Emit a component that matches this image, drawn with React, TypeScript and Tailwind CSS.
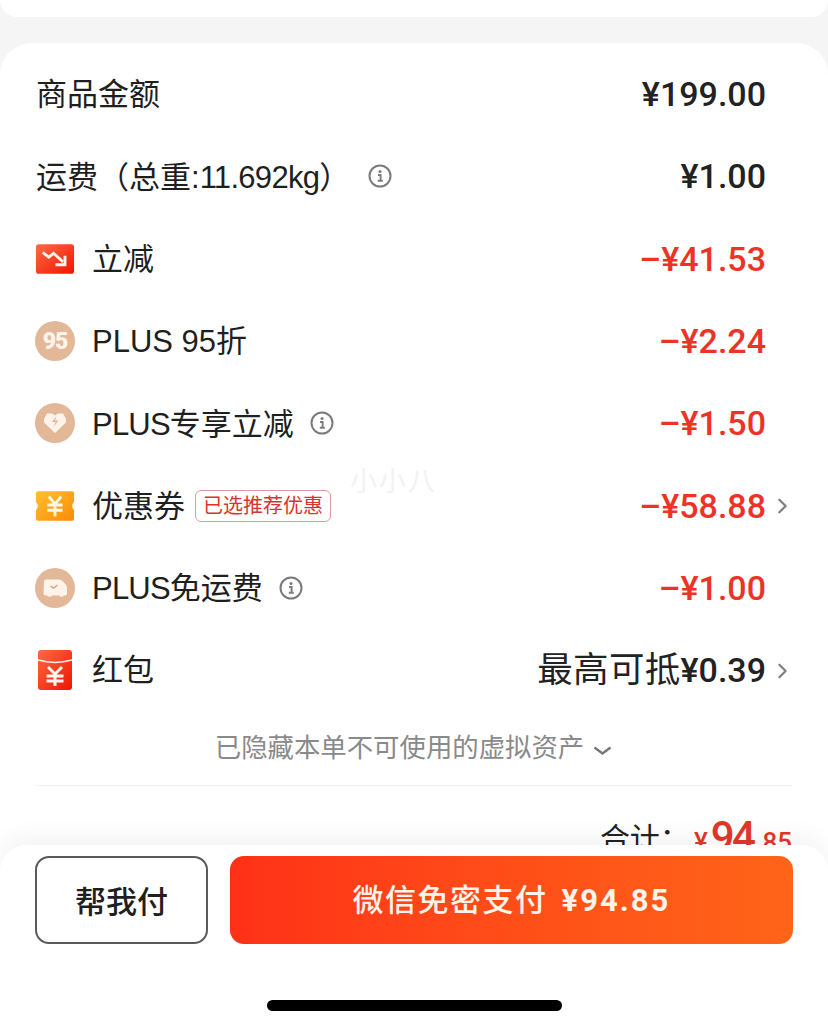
// Order price breakdown with the fixed pay bar at the bottom.
import { ChevronRight } from 'lucide-react';
import type { ReactNode } from 'react';

const BASE = "font-['Liberation_Sans','Noto_Sans_CJK_SC',sans-serif]";
const CJK = "font-['Noto_Sans_CJK_SC','Noto_Sans',sans-serif]";
const NUM = "font-['Roboto','Noto_Sans_CJK_SC',sans-serif]";

function InfoIcon() {
  return (
    <svg width="24" height="24" viewBox="0 0 24 24" fill="none" aria-hidden="true">
      <circle cx="12" cy="12" r="10.5" stroke="#7b7b7b" strokeWidth="2" />
      <circle cx="12" cy="7.6" r="1.5" fill="#7b7b7b" />
      <path d="M10 11h2.600v5.600M9.800 16.800h5" stroke="#7b7b7b" strokeWidth="1.900" />
    </svg>
  );
}

function DropIcon() {
  return (
    <svg width="42" height="32" viewBox="0 0 42 32" aria-hidden="true">
      <defs>
        <linearGradient id="drop" x1="0" y1="0" x2="1" y2="1">
          <stop offset="0" stopColor="#ff6a45" />
          <stop offset="1" stopColor="#f01400" />
        </linearGradient>
      </defs>
      <rect width="40" height="31" x="1" y="0.5" rx="3" fill="url(#drop)" />
      <path d="M8 9l6.500 5 5-4 10 9" fill="none" stroke="#fff3ea" strokeWidth="3" />
      <path d="M31.500 12.500v9.500h-10" fill="none" stroke="#fff3ea" strokeWidth="3" />
    </svg>
  );
}

function Badge95() {
  return (
    <svg width="40" height="40" viewBox="0 0 40 40" aria-hidden="true">
      <circle cx="20" cy="20" r="20" fill="#e3b899" />
      <text x="20" y="28" textAnchor="middle" fontFamily="Roboto" fontWeight="900" fontSize="23" letterSpacing="-1" fill="#fff3ea">
        95
      </text>
    </svg>
  );
}

function BadgeBolt() {
  return (
    <svg width="40" height="40" viewBox="0 0 40 40" aria-hidden="true">
      <circle cx="20" cy="20" r="20" fill="#e3b899" />
      <path d="M9 16l3-5.500h5l3 2 3-2h5l3 5.500v3.500l-11 10.500-11-10.500z" fill="#fff3ea" />
      <path d="M21.500 13l-4.500 6h3.500l-2 5 5-6.500h-3.500z" fill="#e3b899" />
    </svg>
  );
}

function BadgeTruck() {
  return (
    <svg width="40" height="40" viewBox="0 0 40 40" aria-hidden="true">
      <circle cx="20" cy="20" r="20" fill="#e3b899" />
      <path
        d="M9 13.500q0-2 2-2h13q2 0 3.500 1.500l3.500 4q1 1.200 1 2.500v6q0 2-2 2h-1a3 3 0 0 1-5 0h-7a3 3 0 0 1-5 0h-1q-2.500 0-2.500-2.500z"
        fill="#fff3ea"
      />
      <path d="M15.500 18l3 2 4-3" fill="none" stroke="#c9a68e" strokeWidth="1.500" />
    </svg>
  );
}

function CouponIcon() {
  return (
    <svg width="42" height="32" viewBox="0 0 42 32" aria-hidden="true">
      <defs>
        <linearGradient id="coupon" x1="0" y1="0" x2="1" y2="1">
          <stop offset="0" stopColor="#ffc02e" />
          <stop offset="1" stopColor="#fb8a08" />
        </linearGradient>
      </defs>
      <path
        d="M3 .5h36q2 0 2 2V12q-2 1-2 4t2 4v9.500q0 2-2 2H3q-2 0-2-2V20q2-1 2-4t-2-4V2.500q0-2 2-2z"
        fill="url(#coupon)"
      />
      <path d="M14.500 6l6.500 8 6.500-8M13 15h16M13 20.500h16M21 14v13" fill="none" stroke="#fff6e6" strokeWidth="3" />
    </svg>
  );
}

function RedPacketIcon() {
  return (
    <svg width="34" height="40" viewBox="0 0 34 40" aria-hidden="true">
      <defs>
        <linearGradient id="packet" x1="0" y1="0" x2="1" y2="1">
          <stop offset="0" stopColor="#ff6a45" />
          <stop offset="1" stopColor="#f01400" />
        </linearGradient>
      </defs>
      <rect width="34" height="40" rx="3" fill="url(#packet)" />
      <path d="M0 10q17 5 34 0" fill="none" stroke="#fff0e8" strokeWidth="1.500" />
      <path d="M10 17l7 7 7-7M8.500 26h17M8.500 31h17M17 24v12" fill="none" stroke="#fff6ef" strokeWidth="3" />
    </svg>
  );
}

function Row({ icon, children, right }: { icon?: ReactNode; children: ReactNode; right: ReactNode }) {
  return (
    <div className="flex h-[82.3px] items-center">
      {icon && <div className="mr-[17px] flex w-[40px] justify-center">{icon}</div>}
      <div className="flex min-w-0 flex-1 items-center pt-[3px] text-[31px] text-[#1f1f1f]">{children}</div>
      {right}
    </div>
  );
}

function Amount({ value, red, arrow }: { value: string; red?: boolean; arrow?: boolean }) {
  return (
    <div className="relative mr-[26px] mt-[1px] flex items-center">
      <span className={`${NUM} text-[34px] font-medium ${red ? 'text-[#ed3325]' : 'text-[#222222]'}`}>{value}</span>
      {arrow && (
        <ChevronRight className="absolute left-full top-1/2 ml-[4px] -translate-y-1/2 text-[#808080]" size={25} strokeWidth={2.2} aria-hidden="true" />
      )}
    </div>
  );
}

export default function App() {
  return (
    <div className={`relative h-[1027px] w-[828px] overflow-hidden bg-[#f5f5f5] ${BASE}`}>
      <div className="h-[17px] rounded-b-[26px] bg-white" />

      <div className="mt-[26px] h-[984px] rounded-t-[32px] bg-white pl-[35px] pr-[36px] pt-[10px]">
        <Row right={<Amount value="¥199.00" />}>
          <span className="ml-[1px]">商品金额</span>
        </Row>
        <Row right={<Amount value="¥1.00" />}>
          <span className="ml-[1px]">
            运费（总重:<span className="tracking-[-0.7px]">11.692kg</span>）
          </span>
          <span className="mb-[3px] ml-[18px]">
            <InfoIcon />
          </span>
        </Row>
        <Row icon={<DropIcon />} right={<Amount value="–¥41.53" red />}>立减</Row>
        <Row icon={<Badge95 />} right={<Amount value="–¥2.24" red />}>PLUS 95折</Row>
        <Row icon={<BadgeBolt />} right={<Amount value="–¥1.50" red />}>
          <span className="tracking-[-0.8px]">PLUS</span>专享立减
          <span className="mb-[3px] ml-[16px]">
            <InfoIcon />
          </span>
        </Row>
        <Row icon={<CouponIcon />} right={<Amount value="–¥58.88" red arrow />}>
          优惠券
          <span className="mb-[3px] ml-[10px] flex h-[32px] w-[136px] items-center justify-center rounded-[6px] border-[1.5px] border-[#e29a9a] text-[20px] text-[#d9342b]">
            已选推荐优惠
          </span>
        </Row>
        <Row icon={<BadgeTruck />} right={<Amount value="–¥1.00" red />}>
          <span className="tracking-[-0.8px]">PLUS</span>免运费
          <span className="mb-[3px] ml-[16px]">
            <InfoIcon />
          </span>
        </Row>
        <Row
          icon={<RedPacketIcon />}
          right={
            <div className="flex items-center text-[#222222]">
              <span className="text-[35.5px] tracking-[0.3px]">最高可抵</span>
              <Amount value="¥0.39" arrow />
            </div>
          }
        >
          红包
        </Row>

        <div className="flex h-[75px] items-center justify-center border-b border-[#f3f3f3] text-[26.4px] text-[#8a8a8a]">
          已隐藏本单不可使用的虚拟资产
          <svg className="ml-[9px] mt-[5px]" width="19" height="10" viewBox="0 0 19 10" fill="none" aria-hidden="true">
            <path d="M1.500 1.500l8 6 8-6" stroke="#777777" strokeWidth="2.500" />
          </svg>
        </div>

        <div className="mt-[19px] flex items-baseline justify-end text-[#222222]">
          <span className="mr-[4px] -translate-y-[2px] text-[30px]">合计：</span>
          <span className={`${NUM} text-[26px] font-medium text-[#e1372b]`}>¥</span>
          <span className={`${NUM} ml-[3px] text-[42px] font-medium tracking-[-2.5px] text-[#e1372b]`}>94</span>
          <span className={`${NUM} ml-[9px] text-[26px] font-medium text-[#e1372b]`}>85</span>
        </div>
      </div>

      {/* Faint watermark over the list */}
      <div className="absolute left-[350px] top-[462px] text-[27px] tracking-[2px] text-[#f2f2f2]">小小八</div>

      {/* Pay bar, covers the end of the list */}
      <div className="absolute inset-x-0 bottom-0 h-[182px] rounded-t-[26px] bg-white px-[35px] pt-[11px] shadow-[0_-8px_24px_rgba(0,0,0,0.05)]">
        <div className="flex gap-[22px]">
          <button
            type="button"
            className={`${CJK} h-[88px] w-[173px] rounded-[14px] border-2 border-[#5a5a5a] text-[31px] font-medium text-[#1f1f1f]`}
          >
            帮我付
          </button>
          <button
            type="button"
            className={`${CJK} h-[88px] w-[563px] rounded-[14px] bg-gradient-to-r from-[#ff3018] to-[#ff6419] text-[31px] font-medium tracking-[1.5px] text-[#fff3ea]`}
          >
            微信免密支付
            <span className={`${NUM} ml-[14px] font-bold tracking-[2px]`}>¥94.85</span>
          </button>
        </div>
        <div className="mx-auto mt-[56px] h-[11px] w-[295px] rounded-full bg-black" />
      </div>
    </div>
  );
}
